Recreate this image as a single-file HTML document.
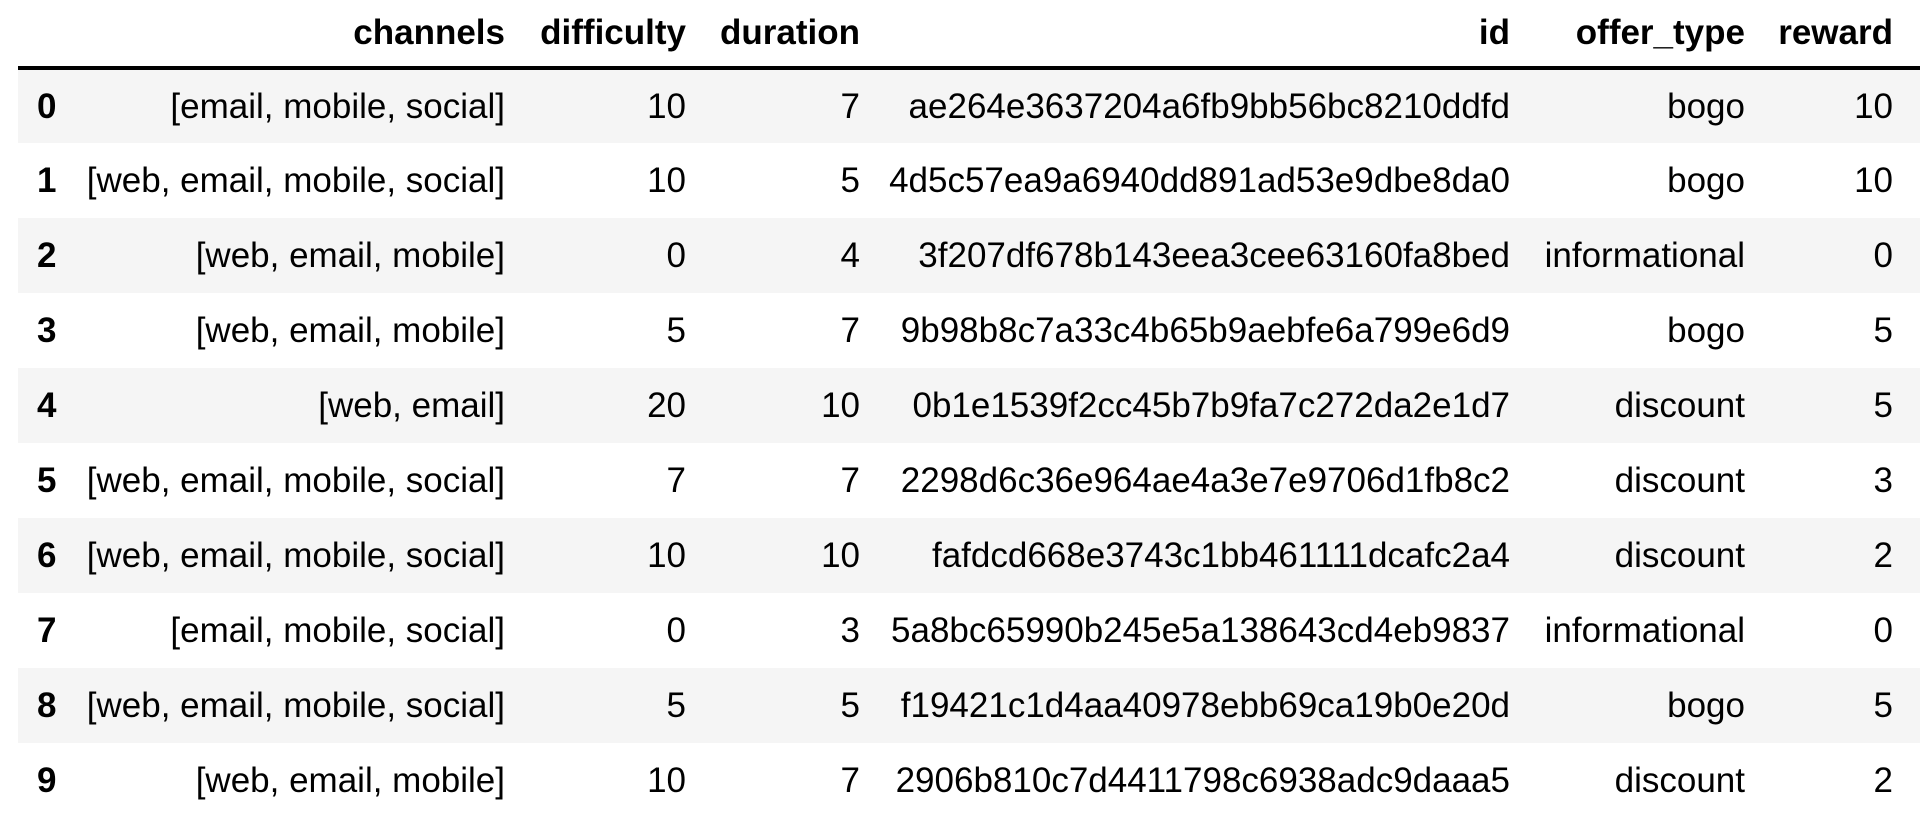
<!DOCTYPE html>
<html><head><meta charset="utf-8"><style>
html,body{margin:0;padding:0;background:#fff;width:1920px;height:820px;overflow:hidden}
table{position:absolute;left:18px;top:0;border-collapse:collapse;table-layout:fixed;width:1902px;font-family:"Liberation Sans",Arial,sans-serif;font-size:35px;color:#000}
th,td{padding:0 12px 0 0;text-align:right;white-space:nowrap;overflow:visible}
thead th{height:66px;font-weight:bold;border-bottom:4px solid #000;vertical-align:middle;padding-top:0}
tbody tr{height:75px}
tbody tr:nth-child(odd){background:#f5f5f5}
tbody th{text-align:left;padding-left:19px;font-weight:bold}
</style></head><body>
<table>
<colgroup><col style="width:57px"><col style="width:442px"><col style="width:181px"><col style="width:174px"><col style="width:650px"><col style="width:235px"><col style="width:148px"><col></colgroup>
<thead><tr><th></th><th>channels</th><th>difficulty</th><th>duration</th><th>id</th><th>offer_type</th><th>reward</th><th></th></tr></thead>
<tbody>
<tr><th>0</th><td>[email, mobile, social]</td><td>10</td><td>7</td><td>ae264e3637204a6fb9bb56bc8210ddfd</td><td>bogo</td><td>10</td><td></td></tr>
<tr><th>1</th><td>[web, email, mobile, social]</td><td>10</td><td>5</td><td>4d5c57ea9a6940dd891ad53e9dbe8da0</td><td>bogo</td><td>10</td><td></td></tr>
<tr><th>2</th><td>[web, email, mobile]</td><td>0</td><td>4</td><td>3f207df678b143eea3cee63160fa8bed</td><td>informational</td><td>0</td><td></td></tr>
<tr><th>3</th><td>[web, email, mobile]</td><td>5</td><td>7</td><td>9b98b8c7a33c4b65b9aebfe6a799e6d9</td><td>bogo</td><td>5</td><td></td></tr>
<tr><th>4</th><td>[web, email]</td><td>20</td><td>10</td><td>0b1e1539f2cc45b7b9fa7c272da2e1d7</td><td>discount</td><td>5</td><td></td></tr>
<tr><th>5</th><td>[web, email, mobile, social]</td><td>7</td><td>7</td><td>2298d6c36e964ae4a3e7e9706d1fb8c2</td><td>discount</td><td>3</td><td></td></tr>
<tr><th>6</th><td>[web, email, mobile, social]</td><td>10</td><td>10</td><td>fafdcd668e3743c1bb461111dcafc2a4</td><td>discount</td><td>2</td><td></td></tr>
<tr><th>7</th><td>[email, mobile, social]</td><td>0</td><td>3</td><td>5a8bc65990b245e5a138643cd4eb9837</td><td>informational</td><td>0</td><td></td></tr>
<tr><th>8</th><td>[web, email, mobile, social]</td><td>5</td><td>5</td><td>f19421c1d4aa40978ebb69ca19b0e20d</td><td>bogo</td><td>5</td><td></td></tr>
<tr><th>9</th><td>[web, email, mobile]</td><td>10</td><td>7</td><td>2906b810c7d4411798c6938adc9daaa5</td><td>discount</td><td>2</td><td></td></tr>
</tbody></table>
</body></html>
